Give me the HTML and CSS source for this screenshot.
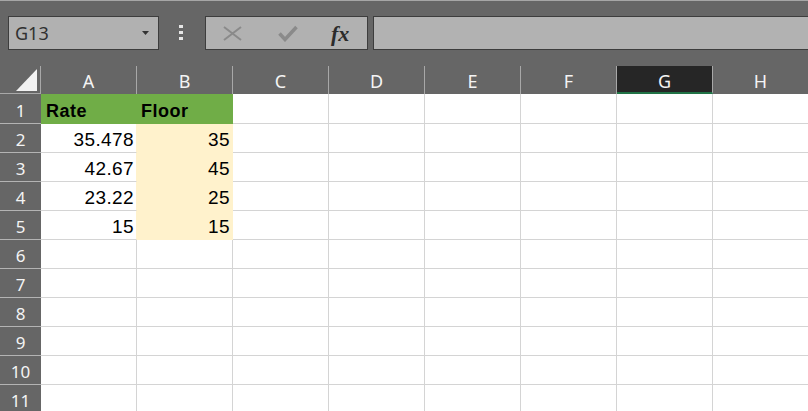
FILE: index.html
```html
<!DOCTYPE html>
<html lang="en">
<head>
    <meta charset="UTF-8">
    <meta name="viewport" content="width=device-width, initial-scale=1.0">
    <title>Sheet</title>
    <link rel="stylesheet" href="styles.css">
</head>
<body>
    <!-- Name box + formula bar -->
    <div class="bar">
        <div class="name-box">
            <span>G13</span>
            <svg class="drop" width="7" height="4" viewBox="0 0 7 4"><polygon points="0,0 7,0 3.5,4" fill="#333"/></svg>
        </div>
        <div class="grip"><i></i><i></i><i></i></div>
        <div class="fx-buttons">
            <svg class="cancel" width="19" height="15" viewBox="0 0 19 15">
                <path d="M1 1 L18 14 M18 1 L1 14" stroke="#8a8a8a" stroke-width="2" fill="none"/>
            </svg>
            <svg class="enter" width="20" height="17" viewBox="0 0 20 17">
                <polyline points="1.5,8.5 7,14.5 18.5,2" stroke="#8a8a8a" stroke-width="3.5" fill="none"/>
            </svg>
            <span class="fx">fx</span>
        </div>
        <div class="formula-input"></div>
    </div>

    <!-- Worksheet -->
    <div class="sheet">
        <div class="corner">
            <svg width="40" height="27" viewBox="0 0 40 27"><polygon points="37,3 37,25 16,25" fill="#f2f2f2"/></svg>
        </div>
        <div class="col-head">A</div>
        <div class="col-head">B</div>
        <div class="col-head">C</div>
        <div class="col-head">D</div>
        <div class="col-head">E</div>
        <div class="col-head">F</div>
        <div class="col-head selected">G</div>
        <div class="col-head">H</div>

        <div class="row-head">1</div>
        <div class="cell head-fill bold first">Rate</div>
        <div class="cell head-fill bold">Floor</div>
        <div class="cell"></div><div class="cell"></div><div class="cell"></div><div class="cell"></div><div class="cell"></div><div class="cell"></div>

        <div class="row-head">2</div>
        <div class="cell num next-fill">35.478</div>
        <div class="cell num floor-fill">35</div>
        <div class="cell"></div><div class="cell"></div><div class="cell"></div><div class="cell"></div><div class="cell"></div><div class="cell"></div>

        <div class="row-head">3</div>
        <div class="cell num next-fill">42.67</div>
        <div class="cell num floor-fill">45</div>
        <div class="cell"></div><div class="cell"></div><div class="cell"></div><div class="cell"></div><div class="cell"></div><div class="cell"></div>

        <div class="row-head">4</div>
        <div class="cell num next-fill">23.22</div>
        <div class="cell num floor-fill">25</div>
        <div class="cell"></div><div class="cell"></div><div class="cell"></div><div class="cell"></div><div class="cell"></div><div class="cell"></div>

        <div class="row-head">5</div>
        <div class="cell num next-fill">15</div>
        <div class="cell num floor-fill">15</div>
        <div class="cell"></div><div class="cell"></div><div class="cell"></div><div class="cell"></div><div class="cell"></div><div class="cell"></div>

        <div class="row-head">6</div>
        <div class="cell"></div><div class="cell"></div><div class="cell"></div><div class="cell"></div><div class="cell"></div><div class="cell"></div><div class="cell"></div><div class="cell"></div>
        <div class="row-head">7</div>
        <div class="cell"></div><div class="cell"></div><div class="cell"></div><div class="cell"></div><div class="cell"></div><div class="cell"></div><div class="cell"></div><div class="cell"></div>
        <div class="row-head">8</div>
        <div class="cell"></div><div class="cell"></div><div class="cell"></div><div class="cell"></div><div class="cell"></div><div class="cell"></div><div class="cell"></div><div class="cell"></div>
        <div class="row-head">9</div>
        <div class="cell"></div><div class="cell"></div><div class="cell"></div><div class="cell"></div><div class="cell"></div><div class="cell"></div><div class="cell"></div><div class="cell"></div>
        <div class="row-head">10</div>
        <div class="cell"></div><div class="cell"></div><div class="cell"></div><div class="cell"></div><div class="cell"></div><div class="cell"></div><div class="cell"></div><div class="cell"></div>
        <div class="row-head">11</div>
        <div class="cell"></div><div class="cell"></div><div class="cell"></div><div class="cell"></div><div class="cell"></div><div class="cell"></div><div class="cell"></div><div class="cell"></div>
    </div>
</body>
</html>
```

FILE: styles.css
```css
* {
    box-sizing: border-box;
}

body {
    margin: 0;
    width: 808px;
    height: 411px;
    overflow: hidden;
    background-color: #666;
    font-family: "Noto Sans", sans-serif;
}

/* top bar */
.bar {
    height: 66px;
    border-top: 1px solid #a6a6a6;
    padding-top: 15px;
    display: flex;
    align-items: flex-start;
}

.bar > * {
    flex-shrink: 0;
}

.name-box {
    margin-left: 8px;
    width: 151px;
    height: 34px;
    border: 1px solid #3d3d3d;
    background-color: #b1b1b1;
    display: flex;
    align-items: center;
    justify-content: space-between;
    padding: 0 9px 0 6px;
    color: #303030;
    font-size: 18px;
    line-height: 32px;
}

.grip {
    margin-left: 20px;
    margin-top: 9px;
    width: 4px;
    display: flex;
    flex-direction: column;
    gap: 3px;
}

.grip i {
    display: block;
    width: 4px;
    height: 3px;
    background-color: #e6e6e6;
}

.fx-buttons {
    margin-left: 22px;
    width: 163px;
    height: 34px;
    border: 1px solid #3d3d3d;
    background-color: #b1b1b1;
    display: flex;
    align-items: center;
    padding-left: 17px;
}

.enter {
    margin-left: 36px;
}

.fx {
    margin-left: 33px;
    font-family: "Liberation Serif", serif;
    font-style: italic;
    font-weight: bold;
    font-size: 22px;
    line-height: 22px;
    color: #2b2b2b;
    margin-top: 2px;
}

.formula-input {
    margin-left: 5px;
    width: 440px;
    height: 34px;
    border: 1px solid #3d3d3d;
    background-color: #b2b2b2;
}

/* grid */
.sheet {
    display: grid;
    grid-template-columns: 41px repeat(8, 96px);
    grid-template-rows: 28px 30px repeat(10, 29px);
    background-color: #fff;
}

.corner {
    background-color: #666;
    border-right: 1px solid #a8a8a8;
    border-bottom: 1px solid #a8a8a8;
}

.corner svg {
    display: block;
}

.col-head {
    background-color: #666;
    color: #f4f4f4;
    font-size: 18px;
    line-height: 24px;
    padding-top: 3px;
    text-align: center;
    border-right: 1px solid #a8a8a8;
}

.col-head.selected {
    background-color: #262626;
    border-bottom: 2px solid #217346;
}

.row-head {
    background-color: #666;
    color: #f4f4f4;
    font-size: 17px;
    line-height: 18px;
    display: flex;
    align-items: flex-end;
    justify-content: center;
    padding-bottom: 3px;
    border-bottom: 1px solid #b4b4b4;
}

.cell {
    border-right: 1px solid #d4d4d4;
    border-bottom: 1px solid #d4d4d4;
    font-family: "Liberation Sans", Arial, sans-serif;
    font-size: 19px;
    line-height: 18px;
    color: #000;
    display: flex;
    align-items: flex-end;
    padding: 0 2px 3px 4px;
}

.num {
    justify-content: flex-end;
    letter-spacing: 0.4px;
}

.bold {
    font-size: 18px;
    font-weight: bold;
    letter-spacing: 0.5px;
}

.head-fill {
    background-color: #70ad47;
    border-color: #70ad47;
}

.head-fill.first {
    padding-left: 5px;
}

.next-fill {
    border-right-color: #fff2cc;
}

.floor-fill {
    background-color: #fff2cc;
    border-color: #fff2cc;
}
```
